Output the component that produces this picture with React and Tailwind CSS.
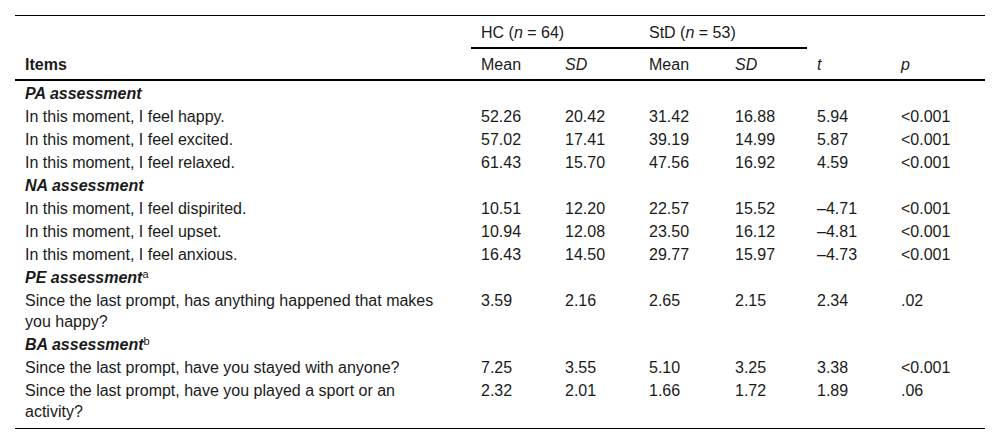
import React from "react";

const cols = "grid grid-cols-[456px_84px_84px_86px_82px_84px_94px]";
const cell = "pl-[10px] pr-[10px]";

const sections = [
  {
    title: "PA assessment",
    rows: [
      ["In this moment, I feel happy.", "52.26", "20.42", "31.42", "16.88", "5.94", "<0.001"],
      ["In this moment, I feel excited.", "57.02", "17.41", "39.19", "14.99", "5.87", "<0.001"],
      ["In this moment, I feel relaxed.", "61.43", "15.70", "47.56", "16.92", "4.59", "<0.001"],
    ],
  },
  {
    title: "NA assessment",
    rows: [
      ["In this moment, I feel dispirited.", "10.51", "12.20", "22.57", "15.52", "\u20134.71", "<0.001"],
      ["In this moment, I feel upset.", "10.94", "12.08", "23.50", "16.12", "\u20134.81", "<0.001"],
      ["In this moment, I feel anxious.", "16.43", "14.50", "29.77", "15.97", "\u20134.73", "<0.001"],
    ],
  },
  {
    title: "PE assessment",
    note: "a",
    rows: [
      ["Since the last prompt, has anything happened that makes you happy?", "3.59", "2.16", "2.65", "2.15", "2.34", ".02"],
    ],
  },
  {
    title: "BA assessment",
    note: "b",
    rows: [
      ["Since the last prompt, have you stayed with anyone?", "7.25", "3.55", "5.10", "3.25", "3.38", "<0.001"],
      ["Since the last prompt, have you played a sport or an activity?", "2.32", "2.01", "1.66", "1.72", "1.89", ".06"],
    ],
  },
];

export default function App() {
  return (
    <div className="w-[1000px] h-[444px] bg-white px-[15px] pt-[15px] font-['Liberation_Sans',Arial,sans-serif] text-[16px] leading-[21px] text-[#1a1a1a]">
      <div className="border-t border-black border-b pb-[6px]">
        {/* header */}
        <div className={`${cols} border-b-2 border-black`}>
          <div className={`${cell} row-span-2 flex items-end pb-[4px] font-bold`}>Items</div>
          <div className={`${cell} col-span-2 pt-[6px] pb-[4px] border-b-2 border-black`}>
            HC (<i>n</i> = 64)
          </div>
          <div className={`${cell} col-span-2 pt-[6px] pb-[4px] border-b-2 border-black`}>
            StD (<i>n</i> = 53)
          </div>
          <div />
          <div />
          <div className={`${cell} pt-[5px] pb-[4px]`}>Mean</div>
          <div className={`${cell} pt-[5px] pb-[4px] italic`}>SD</div>
          <div className={`${cell} pt-[5px] pb-[4px]`}>Mean</div>
          <div className={`${cell} pt-[5px] pb-[4px] italic`}>SD</div>
          <div className={`${cell} pt-[5px] pb-[4px] italic`}>t</div>
          <div className={`${cell} pt-[5px] pb-[4px] italic`}>p</div>
        </div>

        {/* body */}
        {sections.map((s) => (
          <div key={s.title}>
            <div className={`${cols}`}>
              <div className={`${cell} pt-[2px] font-bold italic`}>
                {s.title}
                {s.note && (
                  <span className="relative -top-[5px] text-[11px] font-normal not-italic leading-none">{s.note}</span>
                )}
              </div>
            </div>
            {s.rows.map((r) => (
              <div key={r[0]} className={`${cols}`}>
                {r.map((v, i) => (
                  <div key={i} className={`${i === 0 ? "pl-[10px] pr-[26px]" : cell} pt-[2px]`}>
                    {v}
                  </div>
                ))}
              </div>
            ))}
          </div>
        ))}
      </div>
    </div>
  );
}
